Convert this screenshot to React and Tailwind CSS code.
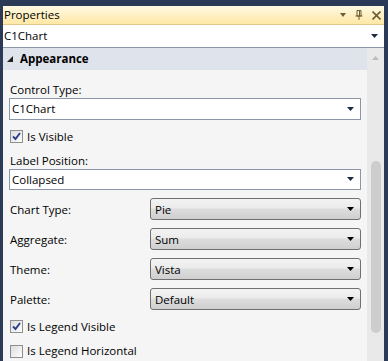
import React from "react";

const font = { fontFamily: '"Open Sans", "Noto Sans", sans-serif' };

function Arrow({ color = "#1e2b45" }) {
  return (
    <svg width="7" height="4" viewBox="0 0 7 4" className="shrink-0">
      <path d="M0 0H7L3.5 4Z" fill={color} />
    </svg>
  );
}

function Check({ checked }) {
  return (
    <div className="w-[13px] h-[13px] border border-[#8f8f8f] bg-gradient-to-br from-[#dcdcdc] to-[#ffffff] flex items-center justify-center shrink-0">
      {checked && (
        <svg width="9" height="9" viewBox="0 0 9 9">
          <path d="M1 4.5L3.5 7L8 1" stroke="#2c3d8c" strokeWidth="1.9" fill="none" />
        </svg>
      )}
    </div>
  );
}

function WhiteCombo({ text }) {
  return (
    <div className="mx-[6px] h-[22px] border border-[#8b97a8] bg-white flex items-center pl-[2px] pr-[6px]">
      <span className="flex-1 text-[11.5px] text-black leading-none">{text}</span>
      <Arrow />
    </div>
  );
}

function GrayCombo({ text }) {
  return (
    <div className="h-[22px] rounded-[3px] border border-[#707070] bg-[linear-gradient(#f3f3f3_0%,#ebebeb_45%,#dddddd_50%,#cfcfcf_100%)] flex items-center pl-[4px] pr-[6px]">
      <span className="flex-1 text-[11.5px] text-black leading-none">{text}</span>
      <Arrow color="#000" />
    </div>
  );
}

function CheckRow({ checked, text, className }) {
  return (
    <div className={"h-[20px] flex items-center pl-[7px] gap-[4px] " + className}>
      <Check checked={checked} />
      <span className="text-[11.5px] text-black">{text}</span>
    </div>
  );
}

export default function App() {
  const rows = [
    ["Chart Type:", "Pie"],
    ["Aggregate:", "Sum"],
    ["Theme:", "Vista"],
    ["Palette:", "Default"],
  ];
  return (
    <div className="w-[388px] h-[361px] bg-[#2b3a57] pt-[6px] pl-[3px] pr-[4px] overflow-hidden" style={font}>
      <div className="h-full flex flex-col bg-[#f5f5f5]">
        <div className="h-[19px] flex items-center pl-[1px] pr-[3px] bg-[linear-gradient(#fff9e3,#ffe8a6)] border-b border-[#e0c98c]">
          <span className="flex-1 text-[11.5px] text-black leading-none">Properties</span>
          <div className="flex items-center gap-[9px]">
            <svg width="6" height="4" viewBox="0 0 6 4"><path d="M0 0H6L3 4Z" fill="#6e5c33" /></svg>
            <svg width="8" height="10" viewBox="0 0 8 10">
              <path d="M2 0.5H6V6H2Z" stroke="#6e5c33" strokeWidth="1" fill="none" />
              <path d="M4.5 1V6" stroke="#6e5c33" strokeWidth="1" />
              <path d="M0.5 6H7.5" stroke="#6e5c33" strokeWidth="1" />
              <path d="M4 6V10" stroke="#6e5c33" strokeWidth="1" />
            </svg>
            <svg width="9" height="9" viewBox="0 0 9 9">
              <path d="M0.5 0.5L8.5 8.5M8.5 0.5L0.5 8.5" stroke="#6e5c33" strokeWidth="1.6" />
            </svg>
          </div>
        </div>
        <div className="h-[23px] bg-white border-b border-[#8b97a8] flex items-center pl-[1px] pr-[6px]">
          <span className="flex-1 text-[11.5px] text-black leading-none">C1Chart</span>
          <Arrow />
        </div>
        <div className="flex-1 flex min-h-0">
          <div className="flex-1 flex flex-col">
            <div className="h-[22px] bg-[#dfe4ec] flex items-center pl-[4px] gap-[7px] shrink-0">
              <svg width="6" height="6" viewBox="0 0 6 6"><path d="M6 0V6H0Z" fill="#1f1f1f" /></svg>
              <span className="text-[11.5px] font-bold text-black">Appearance</span>
            </div>
            <div className="mt-[11px] h-[17px] pl-[7px] text-[11.5px] leading-[17px] text-black">Control Type:</div>
            <WhiteCombo text="C1Chart" />
            <CheckRow checked text="Is Visible" className="mt-[7px]" />
            <div className="mt-[5px] h-[17px] pl-[7px] text-[11.5px] leading-[17px] text-black">Label Position:</div>
            <WhiteCombo text="Collapsed" />
            <div className="mt-[8px] grid grid-cols-[140px_1fr] gap-y-[8px] pl-[7px] pr-[6px]">
              {rows.map(([l, v]) => (
                <React.Fragment key={l}>
                  <div className="h-[22px] flex items-center text-[11.5px] text-black">{l}</div>
                  <GrayCombo text={v} />
                </React.Fragment>
              ))}
            </div>
            <CheckRow checked text="Is Legend Visible" className="mt-[6px]" />
            <CheckRow checked={false} text="Is Legend Horizontal" className="mt-[5px]" />
          </div>
          <div className="w-[17px] bg-[#e9e9e9] flex flex-col items-center pt-[8px]">
            <svg width="7" height="4" viewBox="0 0 7 4"><path d="M3.5 0L7 4H0Z" fill="#bcbcbc" /></svg>
            <div className="mt-[101px] w-[10px] h-[172px] rounded-[5px] bg-[#cdcdcd]" />
          </div>
        </div>
      </div>
    </div>
  );
}
